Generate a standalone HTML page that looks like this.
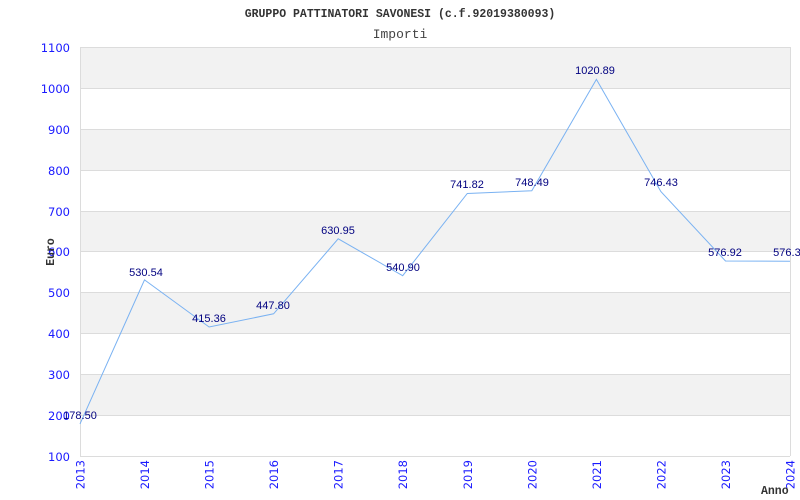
<!DOCTYPE html>
<html><head><meta charset="utf-8"><style>
html,body{margin:0;padding:0;background:#fff;width:800px;height:500px;overflow:hidden}
</style></head><body>
<svg width="800" height="500" xmlns="http://www.w3.org/2000/svg">
<rect width="800" height="500" fill="#fff"/>
<g fill="#f2f2f2">
<rect x="80" y="47" width="710" height="41"/>
<rect x="80" y="129" width="710" height="41"/>
<rect x="80" y="211" width="710" height="40"/>
<rect x="80" y="292" width="710" height="41"/>
<rect x="80" y="374" width="710" height="41"/>
</g>
<g stroke="#dcdcdc" stroke-width="1">
<line x1="80" y1="47.5" x2="790" y2="47.5"/>
<line x1="80" y1="88.5" x2="790" y2="88.5"/>
<line x1="80" y1="129.5" x2="790" y2="129.5"/>
<line x1="80" y1="170.5" x2="790" y2="170.5"/>
<line x1="80" y1="211.5" x2="790" y2="211.5"/>
<line x1="80" y1="251.5" x2="790" y2="251.5"/>
<line x1="80" y1="292.5" x2="790" y2="292.5"/>
<line x1="80" y1="333.5" x2="790" y2="333.5"/>
<line x1="80" y1="374.5" x2="790" y2="374.5"/>
<line x1="80" y1="415.5" x2="790" y2="415.5"/>
<line x1="80" y1="456.5" x2="790" y2="456.5"/>
<line x1="80.5" y1="47" x2="80.5" y2="456"/>
<line x1="790.5" y1="47" x2="790.5" y2="456"/>
</g>
<text x="400" y="17" text-anchor="middle" font-family="Liberation Mono,monospace" font-size="11.5" font-weight="bold" fill="#333">GRUPPO PATTINATORI SAVONESI (c.f.92019380093)</text>
<text x="400" y="38" text-anchor="middle" font-family="Liberation Mono,monospace" font-size="13" fill="#444">Importi</text>
<g font-family="DejaVu Sans,sans-serif" font-size="11.5" fill="#1a1aff" text-anchor="end">
<text x="70" y="52">1100</text><text x="70" y="93">1000</text><text x="70" y="134">900</text>
<text x="70" y="175">800</text><text x="70" y="216">700</text><text x="70" y="256">600</text>
<text x="70" y="297">500</text><text x="70" y="338">400</text><text x="70" y="379">300</text>
<text x="70" y="420">200</text><text x="70" y="461">100</text>
</g>
<g font-family="DejaVu Sans,sans-serif" font-size="11.5" fill="#1a1aff" text-anchor="end">
<text transform="translate(84.5,460) rotate(-90)">2013</text>
<text transform="translate(149,460) rotate(-90)">2014</text>
<text transform="translate(213.6,460) rotate(-90)">2015</text>
<text transform="translate(278.1,460) rotate(-90)">2016</text>
<text transform="translate(342.7,460) rotate(-90)">2017</text>
<text transform="translate(407.2,460) rotate(-90)">2018</text>
<text transform="translate(471.8,460) rotate(-90)">2019</text>
<text transform="translate(536.3,460) rotate(-90)">2020</text>
<text transform="translate(600.9,460) rotate(-90)">2021</text>
<text transform="translate(665.4,460) rotate(-90)">2022</text>
<text transform="translate(730,460) rotate(-90)">2023</text>
<text transform="translate(794.5,460) rotate(-90)">2024</text>
</g>
<text x="761" y="494" font-family="Liberation Mono,monospace" font-size="11.5" font-weight="bold" fill="#333">Anno</text>
<text transform="translate(54,252) rotate(-90)" text-anchor="middle" font-family="Liberation Mono,monospace" font-size="11.5" font-weight="bold" fill="#333">Euro</text>
<polyline fill="none" stroke="#7ab2f2" stroke-width="1" points="80,423.9 144.5,279.9 209.1,327 273.6,313.8 338.2,238.8 402.7,275.7 467.3,193.5 531.8,190.8 596.4,79.4 660.9,191.6 725.5,261 790,261.2"/>
<g font-family="Liberation Sans,Arial,sans-serif" font-size="11" fill="#000080" text-anchor="middle">
<text x="80" y="419">178.50</text>
<text x="146" y="276">530.54</text>
<text x="209" y="322">415.36</text>
<text x="273" y="309">447.80</text>
<text x="338" y="234">630.95</text>
<text x="403" y="271">540.90</text>
<text x="467" y="188">741.82</text>
<text x="532" y="186">748.49</text>
<text x="595" y="74">1020.89</text>
<text x="661" y="186">746.43</text>
<text x="725" y="256">576.92</text>
<text x="790" y="256">576.30</text>
</g>
</svg>
</body></html>
